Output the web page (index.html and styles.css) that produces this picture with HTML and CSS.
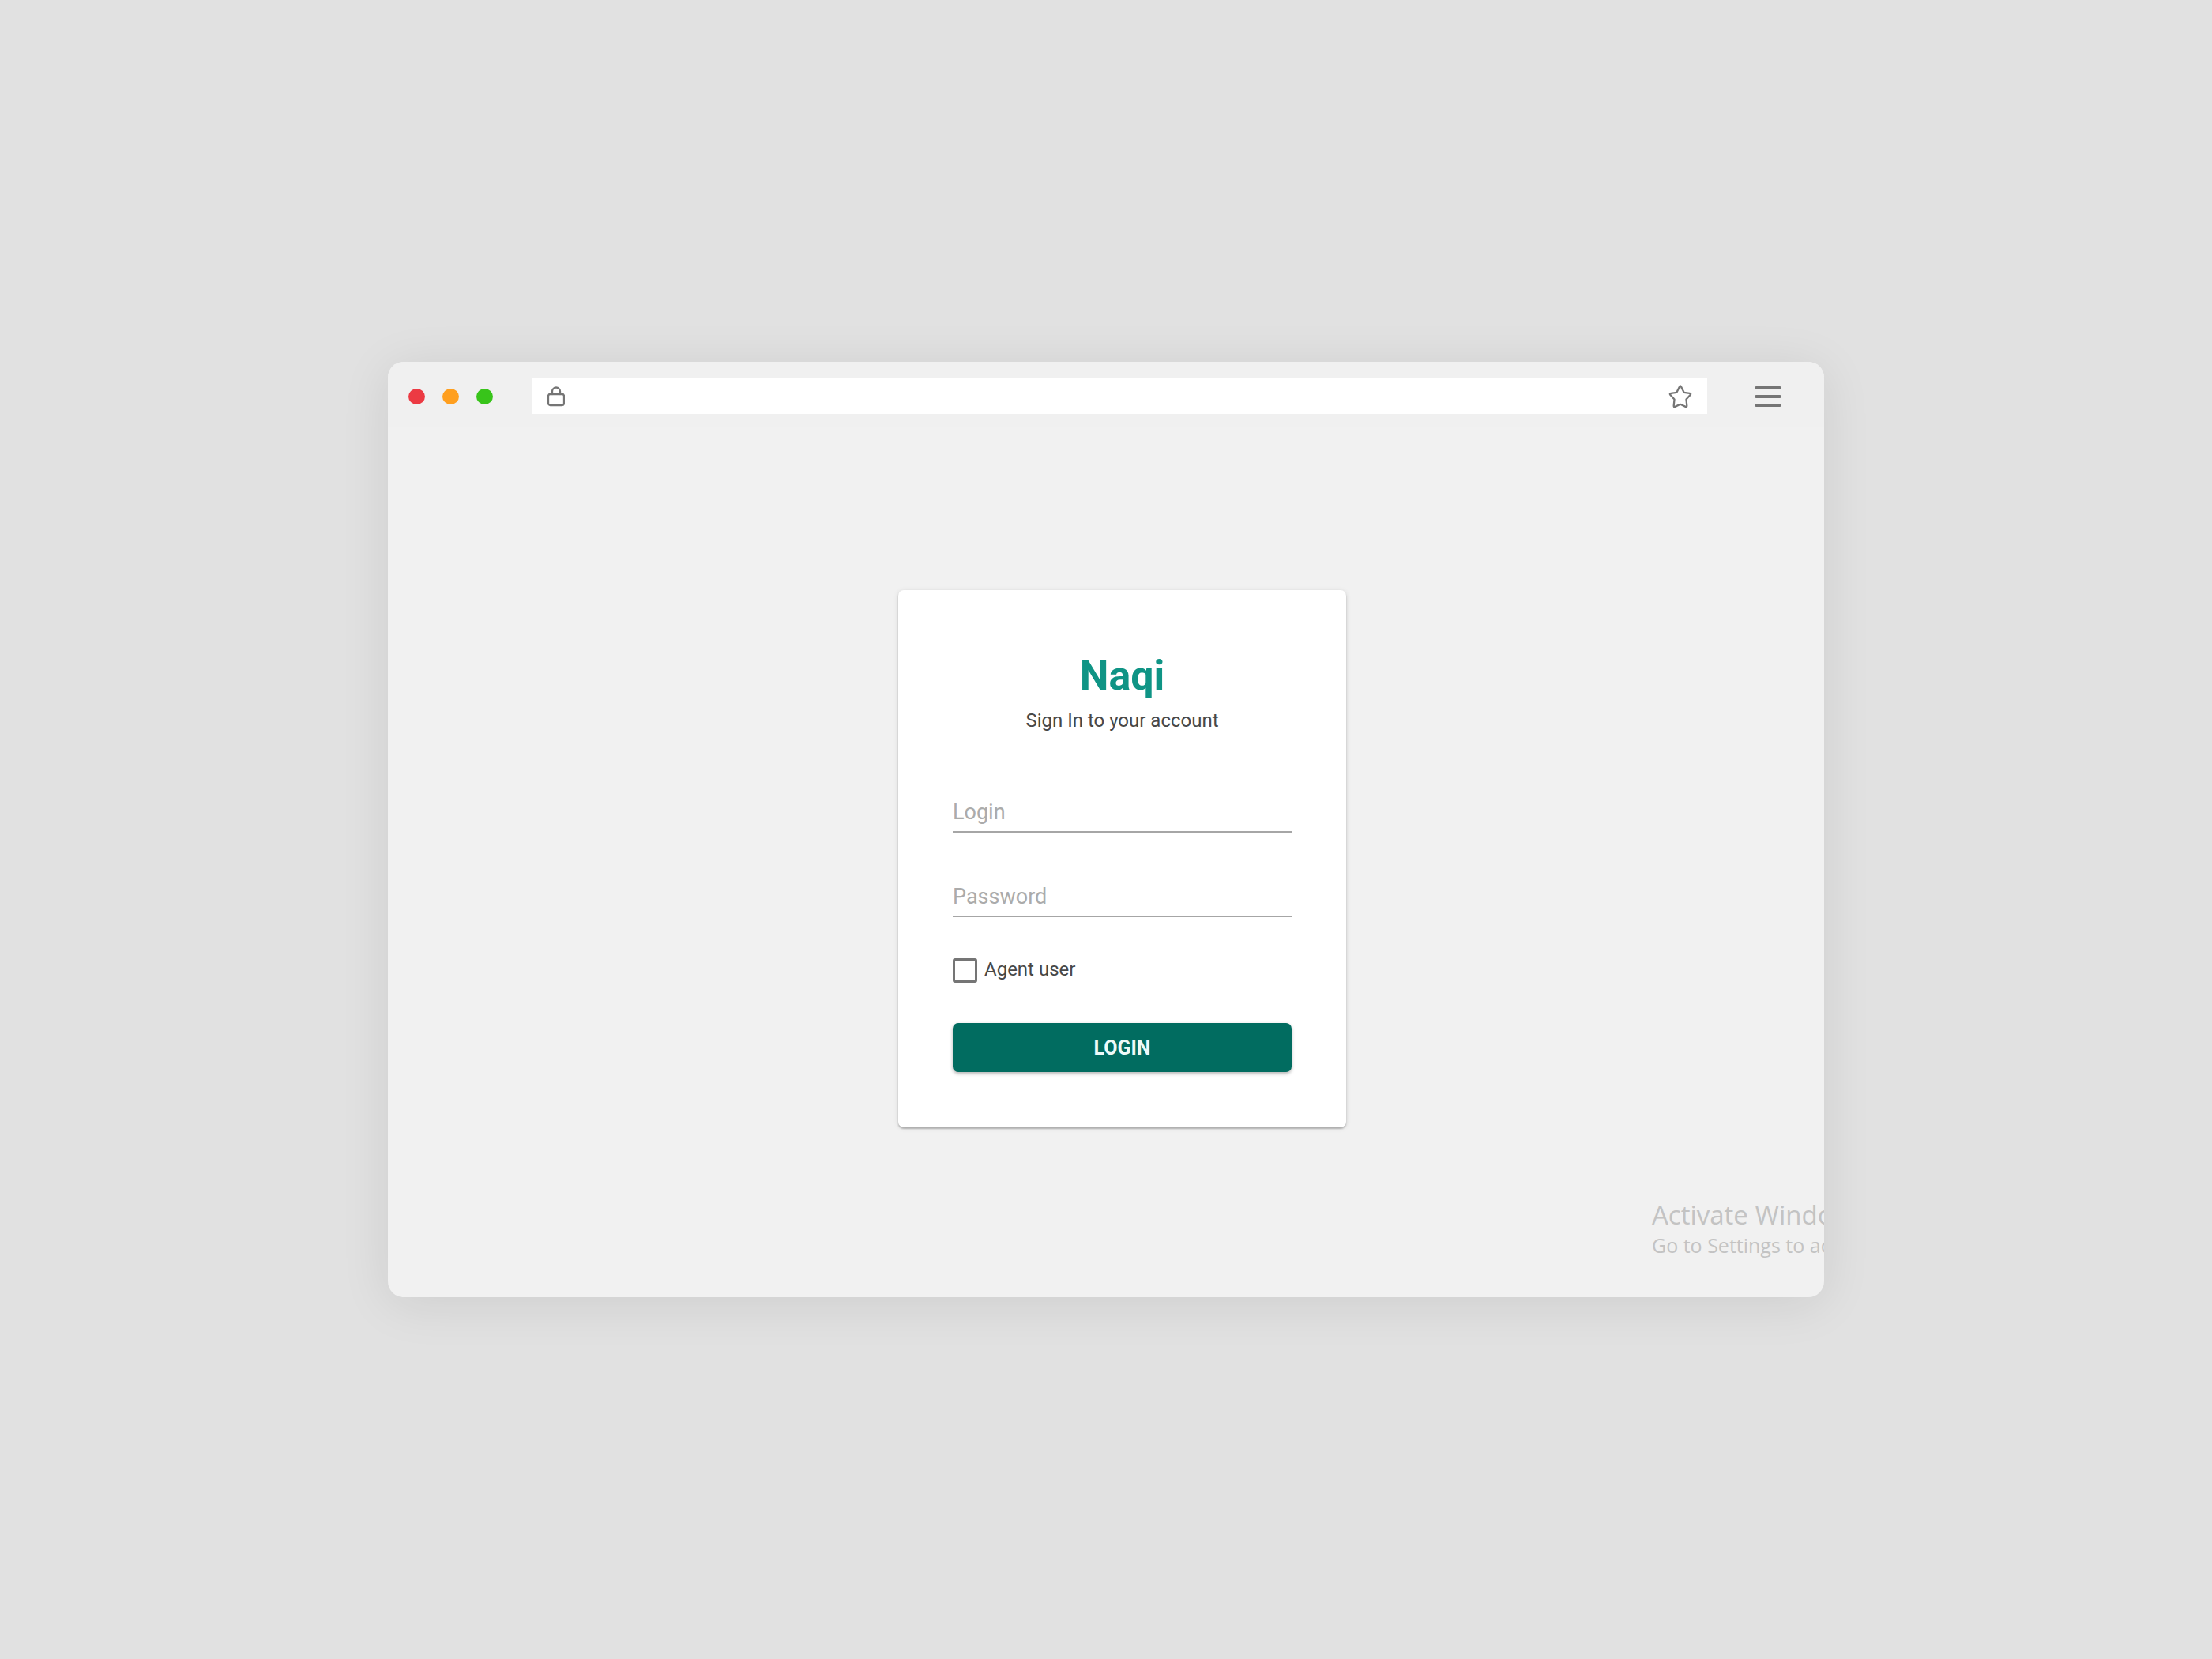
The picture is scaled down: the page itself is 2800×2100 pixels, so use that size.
FILE: index.html
```html
<!DOCTYPE html>
<html lang="en">
<head>
  <meta charset="utf-8">
  <title>Naqi</title>
  <link rel="stylesheet" href="styles.css">
</head>
<body>
  <div class="window">
    <header class="toolbar">
      <div class="dots">
        <span class="dot dot-close"></span>
        <span class="dot dot-minimize"></span>
        <span class="dot dot-expand"></span>
      </div>
      <div class="address">
        <svg class="lock" viewBox="0 0 22 26" aria-hidden="true">
          <rect x="1" y="10" width="20" height="14" rx="2.5"/>
          <path d="M6 10V6.5a5 5 0 0 1 10 0V10"/>
        </svg>
        <input class="address-input" type="text" aria-label="Address">
        <button class="icon-button" type="button" aria-label="Bookmark">
          <svg class="star" viewBox="0 0 30 30" aria-hidden="true">
            <path d="M14 2.500Q15 .3 16 2.500l3.600 7.300 7.200 1q2.100.4.900 2l-5.200 5.800.8 8q.1 2.100-1.700 1.300L15 24.800l-6.600 3.100q-1.800.8-1.700-1.300l.8-8-5.200-5.800q-1.200-1.600.9-2l7.200-1z"/>
          </svg>
        </button>
      </div>
      <button class="icon-button" type="button" aria-label="Menu">
        <svg class="menu" viewBox="0 0 34 26" aria-hidden="true">
          <path d="M2 2h30M2 13h30M2 24h30"/>
        </svg>
      </button>
    </header>
    <main class="content">
      <div class="stage">
        <form class="card">
          <h1 class="title">Naqi</h1>
          <p class="subtitle">Sign In to your account</p>
          <input class="field" type="text" placeholder="Login" aria-label="Login">
          <input class="field" type="password" placeholder="Password" aria-label="Password">
          <label class="agent"><input class="checkbox" type="checkbox">Agent user</label>
          <button class="submit" type="button">LOGIN</button>
        </form>
      </div>
      <aside class="watermark">
        <p class="watermark-title">Activate Windows</p>
        <p class="watermark-text">Go to Settings to activate Windows.</p>
      </aside>
    </main>
  </div>
</body>
</html>
```

FILE: styles.css
```css
* {
  box-sizing: border-box;
}

body {
  margin: 0;
  min-height: 100vh;
  display: flex;
  align-items: center;
  justify-content: center;
  background: #e1e1e1;
  color: #484848;
  font-family: Roboto, "Liberation Sans", sans-serif;
}

h1,
p {
  margin: 0;
}

.window {
  width: 65%;
  max-width: 1818px;
  overflow: hidden;
  border-radius: 20px;
  background: #f1f1f1;
  box-shadow: 0 8px 64px rgba(0, 0, 0, 0.09);
}

.toolbar {
  display: flex;
  align-items: center;
  height: 83px;
  padding: 5px 54px 0 26px;
  border-bottom: 1px solid #e4e4e4;
  background: #f0f0f0;
}

.dots {
  display: flex;
  gap: 22px;
  margin-right: 50px;
}

.dot {
  width: 21px;
  height: 20px;
  border-radius: 50%;
}

.dot-close {
  background: #ec3a43;
}

.dot-minimize {
  background: #ff9f1f;
}

.dot-expand {
  background: #38c41a;
}

.address {
  flex: 1;
  display: flex;
  align-items: center;
  height: 45px;
  margin-right: 60px;
  padding: 0 19px;
  background: #fff;
}

.address-input {
  flex: 1;
  min-width: 0;
  height: 100%;
  padding: 0 16px;
  border: 0;
  outline: 0;
  background: none;
  color: inherit;
  font: 24px Roboto, sans-serif;
}

.icon-button {
  display: flex;
  padding: 0;
  border: 0;
  background: none;
}

svg {
  fill: none;
  stroke: #757575;
  stroke-width: 2.3;
  stroke-linecap: round;
  stroke-linejoin: round;
}

.lock {
  width: 22px;
  height: 26px;
}

.star {
  width: 30px;
  height: 30px;
}

.menu {
  width: 34px;
  height: 26px;
  stroke-width: 4;
}

.content {
  position: relative;
  overflow: hidden;
  padding: 206px 0 215px;
}

.stage {
  width: calc(100% + 41px);
  display: flex;
  justify-content: center;
}

.card {
  display: flex;
  flex-direction: column;
  width: 567px;
  padding: 77px 69px 70px;
  border-radius: 7px;
  background: #fff;
  box-shadow: 0 2px 2px rgba(0, 0, 0, 0.22), 0 1px 6px rgba(0, 0, 0, 0.12);
}

.title {
  color: #0f9485;
  font-size: 52px;
  font-weight: 700;
  line-height: 64px;
  text-align: center;
}

.subtitle {
  margin: 8px 0 67px;
  font-size: 24px;
  line-height: 32px;
  text-align: center;
}

.field {
  width: 100%;
  height: 59px;
  margin-bottom: 48px;
  padding: 8px 0 0;
  border: 0;
  border-bottom: 2px solid #a6a6a6;
  border-radius: 0;
  outline: 0;
  background: none;
  color: inherit;
  font: 27px Roboto, sans-serif;
}

.field::placeholder {
  color: #ababab;
  opacity: 1;
}

.agent {
  display: flex;
  align-items: flex-start;
  gap: 9px;
  margin: 4px 0 51px;
  font-size: 24px;
  line-height: 28px;
}

.checkbox {
  appearance: none;
  width: 31px;
  height: 31px;
  margin: 0;
  border: 3px solid #757575;
  border-radius: 3px;
}

.submit {
  height: 62px;
  padding: 0;
  border: 0;
  border-radius: 7px;
  background: #016c60;
  box-shadow: 0 2px 4px rgba(0, 0, 0, 0.3);
  color: #eefaf8;
  font: 700 25px Roboto, sans-serif;
}

.watermark {
  position: absolute;
  left: calc(100% - 218px);
  bottom: 48px;
  color: #c3c3c3;
  font-family: "Open Sans", "Noto Sans", sans-serif;
  white-space: nowrap;
}

.watermark-title {
  font-size: 33px;
  line-height: 40px;
}

.watermark-text {
  font-size: 25px;
  line-height: 36px;
}
```
